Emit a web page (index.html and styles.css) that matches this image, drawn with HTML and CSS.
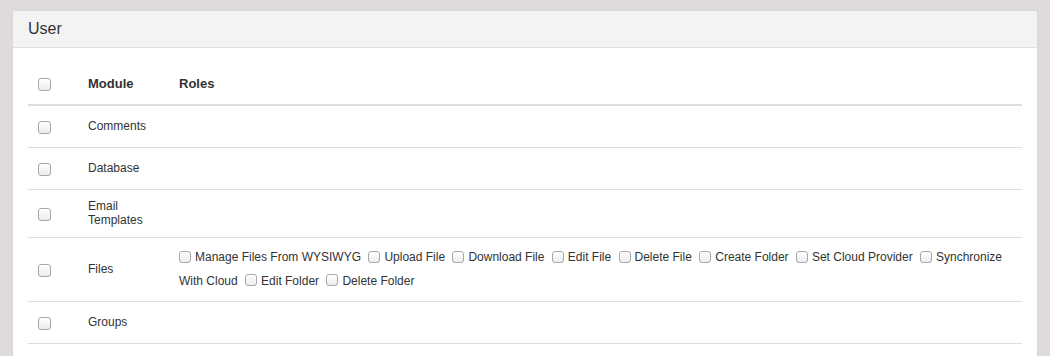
FILE: index.html
```html
<!DOCTYPE html>
<html lang="en">
<head>
    <meta charset="UTF-8">
    <title>User Permissions</title>
    <link rel="stylesheet" href="styles.css">
</head>
<body>
    <div class="panel">
        <div class="panel-heading">
            <h3 class="panel-title">User</h3>
        </div>
        <div class="panel-body">
            <table class="perm-table">
                <thead>
                    <tr>
                        <th class="col-check"><input type="checkbox" class="cb"></th>
                        <th class="col-module">Module</th>
                        <th>Roles</th>
                    </tr>
                </thead>
                <tbody>
                    <tr>
                        <td class="col-check"><input type="checkbox" class="cb"></td>
                        <td class="col-module">Comments</td>
                        <td class="roles"></td>
                    </tr>
                    <tr>
                        <td class="col-check"><input type="checkbox" class="cb"></td>
                        <td class="col-module">Database</td>
                        <td class="roles"></td>
                    </tr>
                    <tr>
                        <td class="col-check"><input type="checkbox" class="cb"></td>
                        <td class="col-module">Email Templates</td>
                        <td class="roles"></td>
                    </tr>
                    <tr>
                        <td class="col-check"><input type="checkbox" class="cb"></td>
                        <td class="col-module">Files</td>
                        <td class="roles">
                            <label class="role"><input type="checkbox" class="cb cb-sm">Manage Files From WYSIWYG</label>
                            <label class="role"><input type="checkbox" class="cb cb-sm">Upload File</label>
                            <label class="role"><input type="checkbox" class="cb cb-sm">Download File</label>
                            <label class="role"><input type="checkbox" class="cb cb-sm">Edit File</label>
                            <label class="role"><input type="checkbox" class="cb cb-sm">Delete File</label>
                            <label class="role"><input type="checkbox" class="cb cb-sm">Create Folder</label>
                            <label class="role"><input type="checkbox" class="cb cb-sm">Set Cloud Provider</label>
                            <label class="role"><input type="checkbox" class="cb cb-sm">Synchronize With Cloud</label>
                            <label class="role"><input type="checkbox" class="cb cb-sm">Edit Folder</label>
                            <label class="role"><input type="checkbox" class="cb cb-sm">Delete Folder</label>
                        </td>
                    </tr>
                    <tr>
                        <td class="col-check"><input type="checkbox" class="cb"></td>
                        <td class="col-module">Groups</td>
                        <td class="roles"></td>
                    </tr>
                </tbody>
            </table>
        </div>
    </div>
</body>
</html>
```

FILE: styles.css
```css
body {
    margin: 0;
    padding: 10px 12px;
    background: #dfdbda;
    font-family: "Liberation Sans", Arial, sans-serif;
    font-size: 12px;
    color: #333;
}

.panel {
    background: #fff;
    border: 1px solid #d8d8d8;
    border-radius: 4px;
    box-shadow: 0 1px 1px rgba(0,0,0,0.05);
}

.panel-heading {
    background: #f3f3f3;
    border-bottom: 1px solid #e0e0e0;
    border-radius: 3px 3px 0 0;
    padding: 10px 15px;
}

.panel-title {
    margin: 0;
    font-size: 16px;
    font-weight: normal;
    line-height: 16px;
    color: #333;
}

.panel-body {
    padding: 15px;
}

.perm-table {
    width: 100%;
    border-collapse: collapse;
}

.perm-table th,
.perm-table td {
    padding: 8px;
    vertical-align: middle;
    text-align: left;
}

.perm-table th {
    height: 25px;
    font-size: 13px;
    font-weight: bold;
    border-bottom: 2px solid #ddd;
}

.perm-table td {
    border-bottom: 1px solid #ddd;
}

.perm-table td.col-check {
    height: 25px;
}

.col-check {
    width: 36px;
}

.col-module {
    width: 75px;
}

.perm-table td.col-module {
    line-height: 13.5px;
    padding-top: 10px;
    padding-bottom: 10px;
}

.perm-table td.roles {
    line-height: 23.5px;
    padding-top: 8px;
    padding-bottom: 8px;
}

.role {
    margin-right: 4px;
}

.cb {
    -webkit-appearance: none;
    appearance: none;
    display: inline-block;
    width: 13px;
    height: 13px;
    margin: 0 0 0 2px;
    border: 1px solid #a8a8a8;
    border-radius: 3px;
    background: linear-gradient(#ffffff, #ececec);
    box-shadow: inset 0 1px 0 #fff;
    vertical-align: middle;
    box-sizing: border-box;
}

.cb-sm {
    width: 12px;
    height: 12px;
    margin: -2px 4px 0 0;
}
```
